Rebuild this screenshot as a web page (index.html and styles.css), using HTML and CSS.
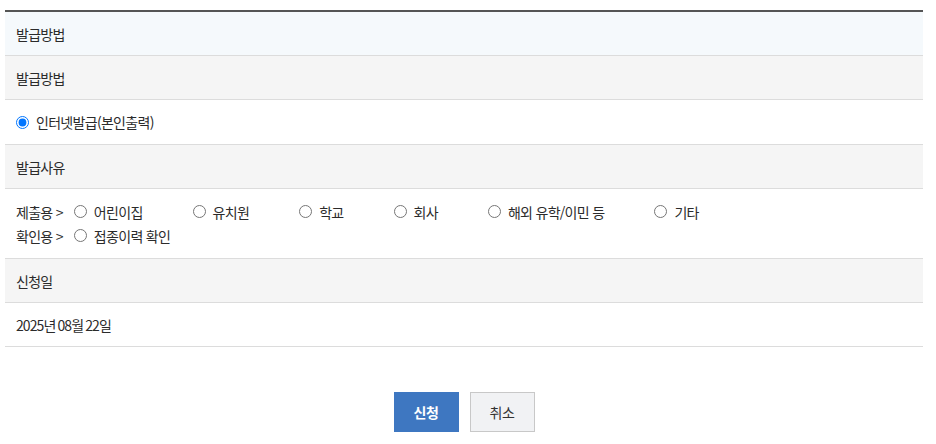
FILE: index.html
```html
<!DOCTYPE html>
<html lang="ko">
<head>
<meta charset="utf-8">
<link rel="stylesheet" href="styles.css">
</head>
<body>
<div class="wrap">
  <div class="table">
    <div class="row head">발급방법</div>
    <div class="row gray">발급방법</div>
    <div class="row tall">
      <label class="opt"><input type="radio" name="m" checked><span>인터넷발급(본인출력)</span></label>
    </div>
    <div class="row gray">발급사유</div>
    <div class="row reason">
      <div class="line">
        <span class="lbl">제출용 &gt;</span>
        <label class="opt"><input type="radio" name="r"><span>어린이집</span></label>
        <label class="opt"><input type="radio" name="r"><span>유치원</span></label>
        <label class="opt"><input type="radio" name="r"><span>학교</span></label>
        <label class="opt"><input type="radio" name="r"><span>회사</span></label>
        <label class="opt"><input type="radio" name="r"><span>해외 유학/이민 등</span></label>
        <label class="opt"><input type="radio" name="r"><span>기타</span></label>
      </div>
      <div class="line">
        <span class="lbl">확인용 &gt;</span>
        <label class="opt"><input type="radio" name="r"><span>접종이력 확인</span></label>
      </div>
    </div>
    <div class="row gray">신청일</div>
    <div class="row date">2025년 08월 22일</div>
  </div>
  <div class="btns">
    <button class="btn primary">신청</button>
    <button class="btn">취소</button>
  </div>
</div>
</body>
</html>
```
FILE: styles.css
```css
* { box-sizing: border-box; }
html, body { margin: 0; padding: 0; background: #fff; }
body {
  font-family: "Noto Sans CJK KR", "Noto Sans", sans-serif;
  font-size: 14px;
  color: #2b2b2b;
  letter-spacing: -0.7px;
}
.wrap { padding: 10px 13px 0 5px; }
.table { border-top: 2px solid #555; }
.row {
  height: 44px;
  border-bottom: 1px solid #dcdcdc;
  display: flex;
  align-items: center;
  padding-left: 11px;
}
.row.tall { height: 45px; }
.row.head { background: #f5f9fc; }
.row.gray { background: #f5f5f5; }
.row.date { letter-spacing: -0.9px; word-spacing: -1px; }
.row.reason {
  height: 70px;
  flex-direction: column;
  align-items: flex-start;
  justify-content: center;
  gap: 4px;
}
.line { display: flex; align-items: center; height: 20px; }
.lbl { margin-right: 11px; }
.opt { display: inline-flex; align-items: center; margin-right: 50px; }
.opt input {
  margin: 0 7px 0 0;
  width: 13px;
  height: 13px;
}
.btns {
  display: flex;
  justify-content: center;
  gap: 11px;
  margin-top: 45px;
}
.btn {
  width: 65px;
  height: 40px;
  font-family: inherit;
  font-size: 14px;
  letter-spacing: -0.3px;
  border: 1px solid #c8c8c8;
  background: #f1f2f4;
  color: #333;
  padding: 0;
}
.btn.primary {
  background: #3e77c1;
  border-color: #3e77c1;
  color: #fff;
  font-weight: bold;
}
```
